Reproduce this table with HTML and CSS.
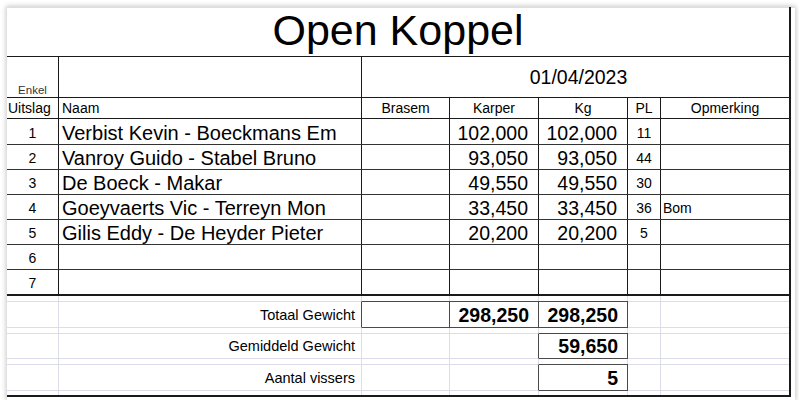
FILE: index.html
```html
<!DOCTYPE html>
<html lang="nl">
<head>
<meta charset="utf-8">
<title>Open Koppel</title>
<link rel="stylesheet" href="styles.css">
</head>
<body>
<div class="frame">
  <div class="sheet">
    <div class="title">Open Koppel</div>

    <div class="row row-date">
      <div class="c w-nr enkel">Enkel</div>
      <div class="c w-naam"></div>
      <div class="c w-date">01/04/2023</div>
    </div>

    <div class="row row-head">
      <div class="c w-nr">Uitslag</div>
      <div class="c w-naam hl">Naam</div>
      <div class="c w-br">Brasem</div>
      <div class="c w-ka">Karper</div>
      <div class="c w-kg">Kg</div>
      <div class="c w-pl">PL</div>
      <div class="c w-op">Opmerking</div>
    </div>

    <div class="row data first">
      <div class="c w-nr nr">1</div>
      <div class="c w-naam name">Verbist Kevin - Boeckmans Em</div>
      <div class="c w-br"></div>
      <div class="c w-ka num">102,000</div>
      <div class="c w-kg num">102,000</div>
      <div class="c w-pl small">11</div>
      <div class="c w-op small"></div>
    </div>
    <div class="row data">
      <div class="c w-nr nr">2</div>
      <div class="c w-naam name">Vanroy Guido - Stabel Bruno</div>
      <div class="c w-br"></div>
      <div class="c w-ka num">93,050</div>
      <div class="c w-kg num">93,050</div>
      <div class="c w-pl small">44</div>
      <div class="c w-op small"></div>
    </div>
    <div class="row data">
      <div class="c w-nr nr">3</div>
      <div class="c w-naam name">De Boeck - Makar</div>
      <div class="c w-br"></div>
      <div class="c w-ka num">49,550</div>
      <div class="c w-kg num">49,550</div>
      <div class="c w-pl small">30</div>
      <div class="c w-op small"></div>
    </div>
    <div class="row data">
      <div class="c w-nr nr">4</div>
      <div class="c w-naam name">Goeyvaerts Vic - Terreyn Mon</div>
      <div class="c w-br"></div>
      <div class="c w-ka num">33,450</div>
      <div class="c w-kg num">33,450</div>
      <div class="c w-pl small">36</div>
      <div class="c w-op small note">Bom</div>
    </div>
    <div class="row data">
      <div class="c w-nr nr">5</div>
      <div class="c w-naam name">Gilis Eddy - De Heyder Pieter</div>
      <div class="c w-br"></div>
      <div class="c w-ka num">20,200</div>
      <div class="c w-kg num">20,200</div>
      <div class="c w-pl small">5</div>
      <div class="c w-op small"></div>
    </div>
    <div class="row data">
      <div class="c w-nr nr">6</div>
      <div class="c w-naam name"></div>
      <div class="c w-br"></div>
      <div class="c w-ka num"></div>
      <div class="c w-kg num"></div>
      <div class="c w-pl small"></div>
      <div class="c w-op small"></div>
    </div>
    <div class="row data last">
      <div class="c w-nr nr">7</div>
      <div class="c w-naam name"></div>
      <div class="c w-br"></div>
      <div class="c w-ka num"></div>
      <div class="c w-kg num"></div>
      <div class="c w-pl small"></div>
      <div class="c w-op small"></div>
    </div>

    <div class="trow gap g0">
      <div class="c w-nr"></div><div class="c w-naam"></div><div class="c w-br"></div><div class="c w-ka"></div><div class="c w-kg"></div><div class="c w-pl"></div><div class="c w-op"></div>
    </div>
    <div class="trow line h27">
      <div class="c w-nr"></div>
      <div class="c w-naam label box-left">Totaal Gewicht</div>
      <div class="c w-br box"></div>
      <div class="c w-ka box bold">298,250</div>
      <div class="c w-kg box bold">298,250</div>
      <div class="c w-pl"></div>
      <div class="c w-op"></div>
    </div>
    <div class="trow gap">
      <div class="c w-nr"></div><div class="c w-naam"></div><div class="c w-br"></div><div class="c w-ka"></div><div class="c w-kg"></div><div class="c w-pl"></div><div class="c w-op"></div>
    </div>
    <div class="trow line h26">
      <div class="c w-nr"></div>
      <div class="c w-naam label">Gemiddeld Gewicht</div>
      <div class="c w-br"></div>
      <div class="c w-ka box-left"></div>
      <div class="c w-kg box bold">59,650</div>
      <div class="c w-pl"></div>
      <div class="c w-op"></div>
    </div>
    <div class="trow gap">
      <div class="c w-nr"></div><div class="c w-naam"></div><div class="c w-br"></div><div class="c w-ka"></div><div class="c w-kg"></div><div class="c w-pl"></div><div class="c w-op"></div>
    </div>
    <div class="trow line h27">
      <div class="c w-nr"></div>
      <div class="c w-naam label">Aantal vissers</div>
      <div class="c w-br"></div>
      <div class="c w-ka box-left"></div>
      <div class="c w-kg box bold">5</div>
      <div class="c w-pl"></div>
      <div class="c w-op"></div>
    </div>
    <div class="trow gap g-end">
      <div class="c w-nr"></div><div class="c w-naam"></div><div class="c w-br"></div><div class="c w-ka"></div><div class="c w-kg"></div><div class="c w-pl"></div><div class="c w-op"></div>
    </div>
  </div>
</div>
</body>
</html>
```

FILE: styles.css
```css
html, body {
  margin: 0;
  padding: 0;
  background: #ffffff;
}

body {
  font-family: "Liberation Sans", Arial, sans-serif;
  color: #000;
  padding: 7px 0 0 7px;
}

.frame {
  width: 788px;
  height: 393px;
  background: #fff;
  box-shadow: 0 0 5px 1px rgba(0, 0, 0, 0.22);
  border-top: 1px solid #d6e0ec;
  box-sizing: border-box;
}

.sheet {
  width: 784px;
  box-sizing: border-box;
  border-right: 2px solid #1a1a1a;
  border-bottom: 2px solid #1a1a1a;
  margin-top: -1px;
}

.title {
  height: 50px;
  box-sizing: border-box;
  border-bottom: 1px solid #1a1a1a;
  text-align: center;
  font-size: 43px;
  line-height: 47px;
}

.row {
  display: flex;
  box-sizing: border-box;
  border-bottom: 1px solid #333;
}

.c {
  box-sizing: border-box;
  border-right: 1px solid #1a1a1a;
  white-space: nowrap;
  overflow: hidden;
}

.w-nr { width: 52px; }
.w-naam { width: 303px; }
.w-br { width: 88px; }
.w-ka { width: 89px; }
.w-kg { width: 89px; }
.w-pl { width: 33px; }
.w-op { width: 128px; border-right: none; }
.w-date { width: 427px; border-right: none; }

/* date row */
.row-date {
  height: 41px;
  border-bottom-color: #1a1a1a;
}

.row-date .w-date {
  display: flex;
  align-items: center;
  justify-content: center;
  font-size: 19.5px;
  padding-left: 6px;
}

.enkel {
  display: flex;
  align-items: flex-end;
  justify-content: center;
  font-size: 11.5px;
  line-height: 14px;
  padding-bottom: 0;
  color: #333;
}

/* header row */
.row-head {
  height: 21px;
  border-bottom-color: #1a1a1a;
  font-size: 14px;
  line-height: 21px;
  text-align: center;
}

.row-head .w-nr {
  text-align: left;
  padding-left: 1px;
}

.row-head .hl {
  text-align: left;
  padding-left: 3px;
}

/* data rows */
.data {
  height: 25px;
}

.data.first {
  height: 26px;
}

.data.last {
  height: 26px;
  border-bottom: 2px solid #1a1a1a;
}

.data .c {
  display: flex;
  align-items: flex-end;
  padding-bottom: 1px;
}

.nr {
  justify-content: center;
  font-size: 14px;
  line-height: 20px;
}

.name {
  font-size: 20px;
  line-height: 20px;
  padding-left: 3px;
}

.num {
  justify-content: flex-end;
  font-size: 19.5px;
  line-height: 20px;
  padding-right: 10px;
}

.small {
  justify-content: center;
  font-size: 14px;
  line-height: 20px;
}

.note {
  justify-content: flex-start;
  padding-left: 2px;
}

/* totals */
.trow {
  display: flex;
}

.trow .c {
  border-right-color: #dcdde9;
}

.trow .w-op {
  border-right: none;
}

.gap {
  height: 5px;
}

.g-end {
  height: 4px;
}

.h27 { height: 27px; }
.h26 { height: 26px; }

.line .c {
  border-top: 1px solid #dcdde9;
  border-bottom: 1px solid #dcdde9;
  display: flex;
  align-items: flex-end;
  padding-bottom: 2px;
}

.label {
  justify-content: flex-end;
  padding-right: 6px;
  font-size: 14.5px;
  line-height: 20px;
}

.trow .c.box {
  border: 1px solid #4a4a4a;
  border-left: none;
}

.trow .c.box-left {
  border-right-color: #4a4a4a;
}

.bold {
  justify-content: flex-end;
  font-weight: bold;
  font-size: 19.5px;
  line-height: 20px;
  padding-right: 9px;
}
```
